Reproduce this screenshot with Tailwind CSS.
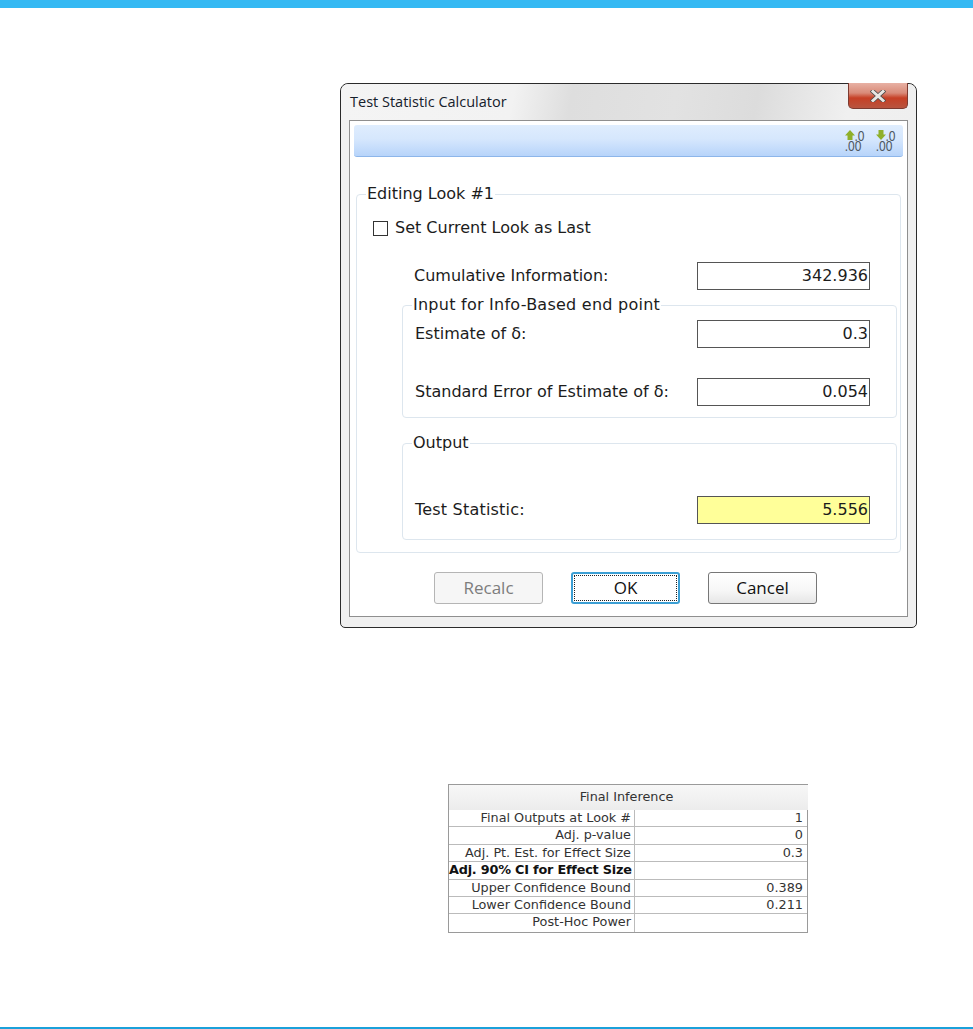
<!DOCTYPE html>
<html lang="en">
<head>
  <meta charset="UTF-8">
  <meta name="viewport" content="width=device-width, initial-scale=1.0">
  <title>Test Statistic Calculator</title>
  <script src="https://cdn.jsdelivr.net/npm/@tailwindcss/browser@4"></script>
</head>
<body class="bg-white">
  <div class="h-[1029px] flex flex-col font-['DejaVu_Sans',sans-serif] text-[#1c1c1c]">
    <div class="h-2 bg-[#35b9f3]"></div>

    <main class="flex-1 flex flex-col">
      <!-- dialog window -->
      <div class="ml-[340px] mt-[75px] w-[577px] h-[545px] border-[1.5px] border-[#2b2b2b] rounded-t-[8px] rounded-b-[5px] bg-[#f0f0f0] flex flex-col">
        <div class="relative h-[36px] shrink-0 rounded-t-[8px] pl-[9px] pt-[9px] text-[14.5px] leading-[18px] font-['Open_Sans',sans-serif] text-[#15202b] bg-[linear-gradient(100deg,#f4f4f4_0%,#f2f2f2_30%,#dedede_40%,#e2e2e2_58%,#dcdcdc_72%,#f0f0f0_88%,#efefef_100%)]">
          Test Statistic Calculator
          <div class="absolute top-[-1px] right-[8px] w-[60px] h-[26px] rounded-b-[5px] border border-t-0 border-[#7c3a30] bg-[linear-gradient(#e8b1a4_0%,#d98a78_40%,#c63f25_60%,#b8543f_100%)] flex items-center justify-center">
            <svg width="16" height="12" viewBox="0 0 16 12"><path d="M3 1.5 L13 10.5 M13 1.5 L3 10.5" stroke="#4a4a4a" stroke-width="4.4" stroke-linecap="square"/><path d="M3 1.5 L13 10.5 M13 1.5 L3 10.5" stroke="#e9e6e2" stroke-width="3" stroke-linecap="square"/></svg>
          </div>
        </div>

        <div class="mx-2 h-[497px] bg-white border border-[#8f8f8f] flex flex-col">
          <!-- toolbar -->
          <div class="mx-[4px] mt-[4px] h-[32px] rounded-[3px] border-b border-[#8db6ea] bg-[linear-gradient(#dfedfe_0%,#d6e7fd_45%,#b7d4fa_100%)] flex justify-end items-center gap-[9px] pr-[6px] pt-[1px]">
            <svg width="22" height="24" viewBox="0 0 22 24">
              <path d="M1 6.5 L6 1 L11 6.5 H8.5 V11 H3.5 V6.5Z" fill="#8fb02a"/>
              <text font-size="15" fill="#4c5560" font-family="Liberation Sans" transform="scale(0.8 1)"><tspan x="13" y="11.5">.0</tspan><tspan x="1" y="22.5">.00</tspan></text>
            </svg>
            <svg width="22" height="24" viewBox="0 0 22 24">
              <path d="M3.5 1 H8.5 V5.5 H11 L6 11 L1 5.5 H3.5Z" fill="#8fb02a"/>
              <text font-size="15" fill="#4c5560" font-family="Liberation Sans" transform="scale(0.8 1)"><tspan x="13" y="11.5">.0</tspan><tspan x="1" y="22.5">.00</tspan></text>
            </svg>
          </div>

          <!-- Editing Look group -->
          <fieldset class="mx-[6px] mt-[28px] h-[368px] border border-[#dde6ee] rounded-[4px] pl-[45px] pr-[3px] min-w-0">
            <legend class="-ml-[36px] px-[1px] text-[16px] leading-[18px]">Editing Look #1</legend>
            <label class="-ml-[29px] mt-[16px] flex items-center gap-[7px] text-[16px] leading-[18px] h-[18px]">
              <span class="w-[15px] h-[15px] border border-[#333] bg-white"></span>
              Set Current Look as Last
            </label>

            <div class="mt-[25px] flex items-center justify-between pr-[27px] h-[28px] text-[16px] pl-[13px] -ml-[1px]">
              <span>Cumulative Information:</span>
              <div class="w-[173px] h-[28px] border border-[#555] pr-[1px] text-right leading-[25px]">342.936</div>
            </div>

            <fieldset class="mt-[6px] h-[122px] border border-[#dde6ee] rounded-[4px] pl-[12px] pr-[26px] min-w-0">
              <legend class="-ml-[3px] px-[1px] text-[16px] leading-[18px] tracking-[0.25px]">Input for Info-Based end point</legend>
              <div class="mt-[6px] flex items-center justify-between h-[28px] text-[16px]">
                <span>Estimate of δ:</span>
                <div class="w-[173px] h-[28px] border border-[#555] pr-[1px] text-right leading-[25px]">0.3</div>
              </div>
              <div class="mt-[30px] flex items-center justify-between h-[28px] text-[16px]">
                <span>Standard Error of Estimate of δ:</span>
                <div class="w-[173px] h-[28px] border border-[#555] pr-[1px] text-right leading-[25px]">0.054</div>
              </div>
            </fieldset>

            <fieldset class="mt-[16px] h-[106px] border border-[#dde6ee] rounded-[4px] pl-[12px] pr-[26px] min-w-0">
              <legend class="-ml-[3px] px-[1px] text-[16px] leading-[18px]">Output</legend>
              <div class="mt-[44px] flex items-center justify-between h-[28px] text-[16px]">
                <span class="tracking-[0.2px]">Test Statistic:</span>
                <div class="w-[173px] h-[28px] border border-[#555] bg-[#ffff99] pr-[1px] text-right leading-[25px]">5.556</div>
              </div>
            </fieldset>
          </fieldset>

          <!-- buttons -->
          <div class="mt-[19px] flex justify-center gap-[28px] pr-[6px] text-[17px] font-['Open_Sans',sans-serif]">
            <button class="w-[109px] h-[32px] rounded-[3px] border border-[#b5b5b5] bg-[#f6f6f6] text-[#7d7d7d]">Recalc</button>
            <button class="w-[109px] h-[32px] rounded-[3px] border-2 border-[#3c9fd4] bg-white text-[#111] p-[1px]">
              <span class="flex h-full items-center justify-center border border-dotted border-[#222]">OK</span>
            </button>
            <button class="w-[109px] h-[32px] rounded-[3px] border border-[#777] bg-[linear-gradient(#ffffff,#f6f6f6_60%,#e6e6e6)] text-[#111]">Cancel</button>
          </div>
        </div>
      </div>

      <!-- final inference table -->
      <div class="ml-[448px] mt-[156px] w-[360px] border-l border-[#9a9a9a] text-[12.8px] leading-[15px] text-[#333]">
        <div class="h-[26px] border-t border-[#9a9a9a] bg-[linear-gradient(#f7f7f7,#ececec)] flex items-center justify-center pr-[4px] pb-[2px]">Final Inference</div>
        <div class="border-r border-b border-[#9a9a9a] grid grid-cols-[186px_1fr] auto-rows-[17.4px]">
          <div class="border-r border-b border-[#bbb] text-right pr-[3px]">Final Outputs at Look #</div><div class="border-b border-[#bbb] text-right pr-[4px]">1</div>
          <div class="border-r border-b border-[#bbb] text-right pr-[3px]">Adj. p-value</div><div class="border-b border-[#bbb] text-right pr-[4px]">0</div>
          <div class="border-r border-b border-[#bbb] text-right pr-[3px]">Adj. Pt. Est. for Effect Size</div><div class="border-b border-[#bbb] text-right pr-[4px]">0.3</div>
          <div class="border-r border-b border-[#bbb] text-right pr-[3px] font-bold text-[#111] tracking-[-0.2px] whitespace-nowrap">Adj. 90% CI for Effect Size</div><div class="border-b border-[#bbb]"></div>
          <div class="border-r border-b border-[#bbb] text-right pr-[3px]">Upper Confidence Bound</div><div class="border-b border-[#bbb] text-right pr-[4px]">0.389</div>
          <div class="border-r border-b border-[#bbb] text-right pr-[3px]">Lower Confidence Bound</div><div class="border-b border-[#bbb] text-right pr-[4px]">0.211</div>
          <div class="border-r border-[#bbb] text-right pr-[3px]">Post-Hoc Power</div><div></div>
        </div>
      </div>
    </main>

    <div class="h-[2px] bg-[#1ba1da]"></div>
  </div>
</body>
</html>
